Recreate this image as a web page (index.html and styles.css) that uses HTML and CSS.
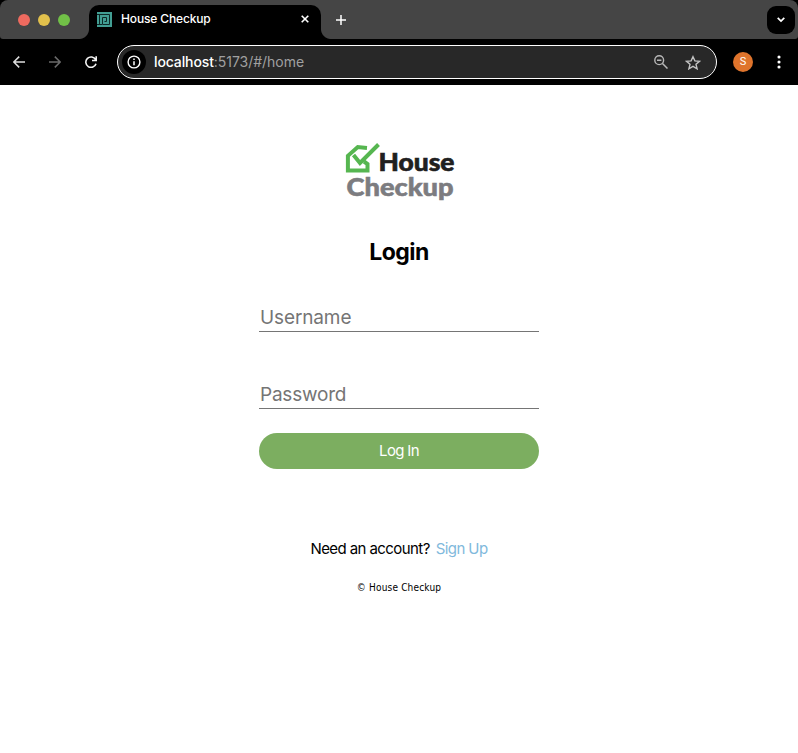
FILE: index.html
```html
<!DOCTYPE html>
<html lang="en">
<head>
<meta charset="utf-8">
<title>House Checkup</title>
<link rel="stylesheet" href="styles.css">
</head>
<body>
<header class="browser">
  <div class="tabstrip">
    <div class="lights"><i class="red"></i><i class="yellow"></i><i class="green"></i></div>
    <div class="tab">
      <svg class="favicon" viewBox="0 0 15 15"><path fill="#429e93" d="M0 0h15v15H0z"/><path fill="none" stroke="#0d2927" d="M0 2.500h3M2.500 12.500v-10h10v10h-7v-7h4v4h-2M0 12.500h5"/></svg>
      <span class="tab-title">House Checkup</span>
      <svg class="close" viewBox="0 0 8 8"><path d="M.7.7l6.600 6.600M7.300.7L.7 7.300" fill="none" stroke="#fff" stroke-width="1.600"/></svg>
    </div>
    <svg class="plus" viewBox="0 0 10 10"><path d="M5 0v10M0 5h10" fill="none" stroke="#fff" stroke-width="1.500"/></svg>
    <div class="tab-search"><svg width="8" height="6" viewBox="0 0 8 6"><path d="M.7.8L4 4.100 7.300.8" fill="none" stroke="#fff" stroke-width="1.700"/></svg></div>
  </div>
  <div class="toolbar">
    <svg class="nav back" viewBox="0 0 12 12"><path d="M12 6H1M6.200.6L.8 6l5.400 5.400" fill="none" stroke="#dedede" stroke-width="1.500"/></svg>
    <svg class="nav forward" viewBox="0 0 12 12"><path d="M0 6h11M5.800.6L11.200 6l-5.400 5.400" fill="none" stroke="#6b6b6b" stroke-width="1.500"/></svg>
    <svg class="nav reload" viewBox="0 0 12 12"><path d="M10.600 3.700A5.200 5.200 0 1 0 11 7.700M11.200.2v4.300H7" fill="none" stroke="#f2f2f2" stroke-width="1.600"/></svg>
    <div class="address">
      <span class="info"><svg width="14" height="14" viewBox="0 0 14 14"><circle cx="7" cy="7" r="5.900" fill="none" stroke="#fff" stroke-width="1.400"/><path d="M7 6.300v4M7 3.500v1.500" stroke="#fff" stroke-width="1.500"/></svg></span>
      <span class="url"><b>localhost</b>:5173/#/home</span>
      <svg class="magnifier" viewBox="0 0 14 14"><circle cx="5.200" cy="5.200" r="4.400" fill="none" stroke="#b8b8b8" stroke-width="1.400"/><path d="M3 5.200h4.400M8.500 8.500l5 5" fill="none" stroke="#b8b8b8" stroke-width="1.500"/></svg>
      <svg class="star" viewBox="0 0 16 15"><path d="M8 1.700l1.900 4.200 4.600.4-3.500 3 1.100 4.500L8 11.400l-4.100 2.400L5 9.300l-3.500-3 4.600-.4z" fill="none" stroke="#c4c4c4" stroke-width="1.400"/></svg>
    </div>
    <span class="avatar">S</span>
    <svg class="dots" viewBox="0 0 4 14" fill="#fff"><circle cx="2" cy="2" r="1.550"/><circle cx="2" cy="7" r="1.550"/><circle cx="2" cy="12" r="1.550"/></svg>
  </div>
</header>
<main class="page">
  <svg class="logo" viewBox="0 0 112 60" role="img" aria-label="House Checkup">
    <path d="M24 5.900L14.800 5.100 4.900 13.800v14.700H24.500V22l-3.500-2.500" fill="none" stroke="#56b650" stroke-width="4"/>
    <path d="M10.500 13l6.500 8L35.500 2.500" fill="none" stroke="#56b650" stroke-width="4"/>
    <text class="logo-house" x="35.500" y="28.700" textLength="76" lengthAdjust="spacingAndGlyphs">House</text>
    <text class="logo-checkup" x="3.500" y="54" textLength="107" lengthAdjust="spacingAndGlyphs">Checkup</text>
  </svg>
  <h1>Login</h1>
  <form class="form">
    <input class="field username" type="text" placeholder="Username">
    <input class="field" type="password" placeholder="Password">
    <button class="submit" type="button">Log In</button>
  </form>
  <p class="signup"><span class="question">Need an account?</span><a>Sign Up</a></p>
  <footer>© House Checkup</footer>
</main>
</body>
</html>
```
FILE: styles.css
```css
* { box-sizing: border-box; }
body { margin: 0; height: 753px; overflow: hidden; background: #fff; color: #000; font-family: Inter, sans-serif; }
svg { display: block; flex: none; }
.browser { height: 85px; background: #000; }
.tabstrip { height: 39px; background: #454545; display: flex; align-items: center; border-radius: 8px 8px 3px 3px; }
.lights { display: flex; gap: 8px; padding-left: 18px; width: 89px; }
.lights i { width: 12px; height: 12px; border-radius: 50%; }
.red { background: #ee6a5f; }
.yellow { background: #e1c04c; }
.green { background: #71c047; }
.tab { position: relative; width: 232px; height: 34px; align-self: flex-end; background: #000; border-radius: 10px 10px 0 0; display: flex; align-items: center; padding: 0 12px 6px 8px; }
.tab::before, .tab::after { content: ""; position: absolute; bottom: 0; width: 10px; height: 10px; }
.tab::before { left: -10px; background: radial-gradient(circle at 0 0, #454545 9.500px, #000 10.500px); }
.tab::after { right: -10px; background: radial-gradient(circle at 100% 0, #454545 9.500px, #000 10.500px); }
.favicon { width: 15px; height: 15px; margin-right: 9px; }
.tab-title { flex: 1; color: #fff; font: 500 12px/16px Inter, sans-serif; letter-spacing: -.14px; }
.close { width: 8px; height: 8px; }
.plus { width: 10px; height: 10px; margin-left: 15px; }
.tab-search { width: 28px; height: 28px; margin-left: auto; margin-right: 3px; border-radius: 9px; background: #000; display: flex; align-items: center; justify-content: center; }
.toolbar { height: 46px; display: flex; align-items: center; padding-left: 13px; }
.nav { width: 12px; height: 12px; margin-right: 24px; }
.reload { margin-right: 20px; }
.address { width: 600px; height: 34px; background: #282828; border: 1px solid #fff; border-radius: 17px; display: flex; align-items: center; padding: 0 15px 0 4px; }
.info { width: 24px; height: 24px; border-radius: 50%; background: #000; display: flex; align-items: center; justify-content: center; margin-right: 8px; }
.url { flex: 1; color: #a0a0a0; font: 400 14px/18px Inter, sans-serif; letter-spacing: -.03px; }
.url b { color: #fff; font-weight: 500; letter-spacing: -.12px; }
.magnifier { width: 14px; height: 14px; margin-right: 17px; }
.star { width: 16px; height: 15px; }
.avatar { width: 20px; height: 20px; margin-left: 16px; border-radius: 50%; background: #df742c; color: #fff; font: 11px/20px Roboto, sans-serif; text-align: center; }
.dots { width: 4px; height: 14px; margin-left: 24px; }
.page { width: 280px; margin: 0 auto; padding-top: 57px; display: flex; flex-direction: column; align-items: center; }
.logo { width: 112px; height: 60px; }
.logo text { font-family: Lato, sans-serif; font-weight: 900; stroke-width: .6px; }
.logo-house { font-size: 25px; fill: #202020; stroke: #202020; }
.logo-checkup { font-size: 25px; fill: #7c7c80; stroke: #7c7c80; }
h1 { margin: 34px 0 0; font-size: 23px; line-height: 32px; font-weight: 700; letter-spacing: -.5px; }
.form { width: 280px; margin-top: 34px; display: flex; flex-direction: column; }
.field { width: 280px; height: 30px; margin: 0 0 47px; padding: 2px 1px 1px; border: 0; border-bottom: 1px solid #757575; background: none; font: 400 19px/26px Inter, sans-serif; letter-spacing: -.22px; outline: none; }
.username { letter-spacing: -.12px; }
.field::placeholder { color: #757575; opacity: 1; }
.field + .field { margin-bottom: 24px; }
.submit { height: 36px; padding: 0; border: 0; border-radius: 18px; background: #7cae60; color: #fff; font: 400 15px/20px Inter, sans-serif; letter-spacing: -.65px; }
.signup { margin: 70px 0 0; display: flex; gap: 6px; font-size: 15px; line-height: 20px; letter-spacing: -.58px; white-space: nowrap; }
.signup a { color: #7fb9dc; }
footer { margin-top: 21px; font: 10px/16px "DejaVu Sans Condensed", "DejaVu Sans", sans-serif; font-stretch: condensed; letter-spacing: .18px; white-space: nowrap; }
```
